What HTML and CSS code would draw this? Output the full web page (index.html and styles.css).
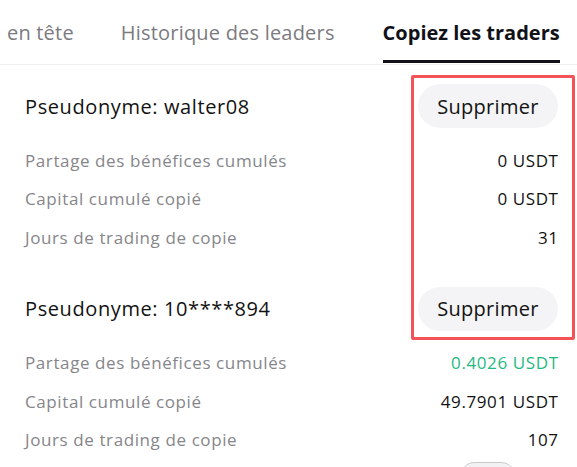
FILE: index.html
```html
<!DOCTYPE html>
<html lang="fr">
<head>
    <meta charset="UTF-8">
    <meta name="viewport" content="width=device-width, initial-scale=1.0">
    <title>Copiez les traders</title>
    <link rel="stylesheet" href="styles.css">
</head>
<body>
    <div class="tabs">
        <div class="tab tab-first">en tête</div>
        <div class="tab">Historique des leaders</div>
        <div class="tab active">Copiez les traders</div>
    </div>

    <div class="list">
        <div class="trader">
            <div class="trader-head">
                <span class="trader-name">Pseudonyme: walter08</span>
                <button class="remove-btn">Supprimer</button>
            </div>
            <div class="row">
                <span class="label">Partage des bénéfices cumulés</span>
                <span class="value">0 USDT</span>
            </div>
            <div class="row">
                <span class="label">Capital cumulé copié</span>
                <span class="value">0 USDT</span>
            </div>
            <div class="row">
                <span class="label">Jours de trading de copie</span>
                <span class="value">31</span>
            </div>
        </div>

        <div class="trader">
            <div class="trader-head">
                <span class="trader-name">Pseudonyme: 10****894</span>
                <button class="remove-btn">Supprimer</button>
            </div>
            <div class="row">
                <span class="label">Partage des bénéfices cumulés</span>
                <span class="value profit">0.4026 USDT</span>
            </div>
            <div class="row">
                <span class="label">Capital cumulé copié</span>
                <span class="value">49.7901 USDT</span>
            </div>
            <div class="row">
                <span class="label">Jours de trading de copie</span>
                <span class="value">107</span>
            </div>
        </div>
    </div>

    <div class="highlight"></div>
    <div class="float-btn"></div>
</body>
</html>
```

FILE: styles.css
```css
body {
    font-family: 'Open Sans', 'Roboto', sans-serif;
    margin: 0;
    padding: 0;
    background: #fff;
    color: #121212;
    overflow: hidden;
    height: 467px;
    position: relative;
}

.tabs {
    display: flex;
    height: 64px;
    border-bottom: 1px solid #efeff1;
    white-space: nowrap;
}

.tab {
    position: relative;
    display: flex;
    align-items: center;
    font-size: 20px;
    letter-spacing: 0.2px;
    color: #7b7b7f;
    margin-right: 48px;
}

.tab-first {
    margin-left: 7px;
    margin-right: 47px;
}

.tab.active {
    color: #111118;
    font-weight: 700;
    letter-spacing: 0;
    margin-right: 0;
}

.tab.active::after {
    content: '';
    position: absolute;
    left: 0;
    right: 0;
    bottom: 1px;
    height: 3px;
    background: #111118;
}

.list {
    padding: 19px 19px 0 25px;
}

.trader {
    margin-bottom: 30px;
}

.trader-head {
    display: flex;
    justify-content: space-between;
    align-items: center;
    height: 44px;
    margin-bottom: 13px;
}

.trader-name {
    font-size: 20px;
    letter-spacing: 0.6px;
}

.remove-btn {
    width: 140px;
    height: 44px;
    border: none;
    border-radius: 22px;
    background: #f4f4f6;
    color: #121212;
    font-family: inherit;
    font-size: 20px;
    letter-spacing: 0.3px;
    cursor: pointer;
}

.row {
    display: flex;
    justify-content: space-between;
    align-items: center;
    height: 38.5px;
    font-size: 17px;
    letter-spacing: 0.6px;
}

.label {
    color: #86868a;
}

.value {
    color: #121212;
    margin-right: -0.6px;
}

.value.profit {
    color: #1fb97f;
}

/* red frame drawn over the delete buttons */
.highlight {
    position: absolute;
    left: 411px;
    top: 75px;
    width: 158px;
    height: 259px;
    border: 3px solid #f35256;
    border-radius: 2px;
}

/* floating control peeking in at the bottom edge */
.float-btn {
    position: absolute;
    left: 460px;
    top: 462px;
    width: 56px;
    height: 30px;
    border-radius: 15px;
    background: #f2f2f4;
    border-top: 1px solid #c9c9cc;
}
```
